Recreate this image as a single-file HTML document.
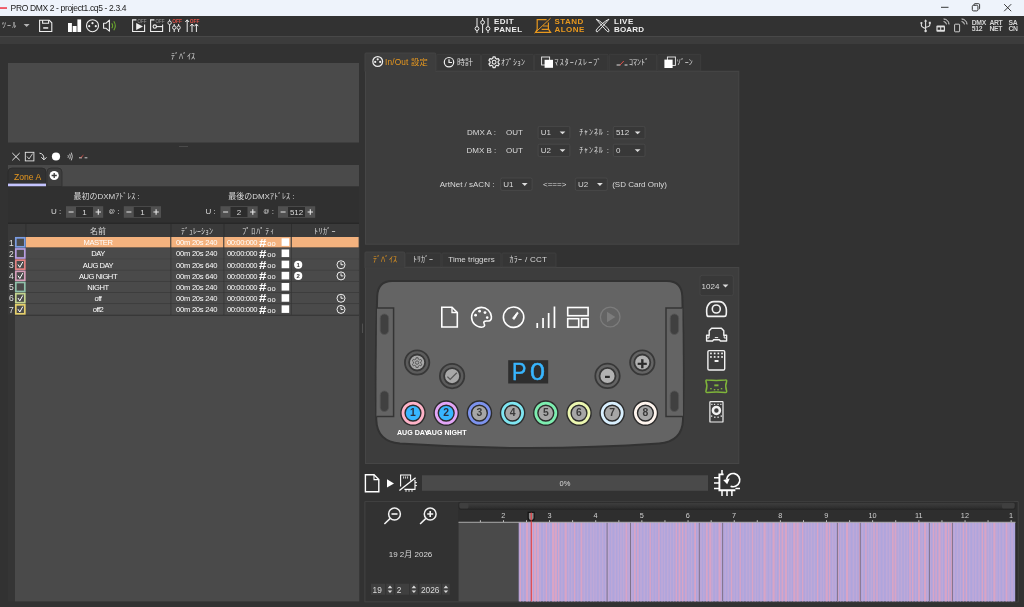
<!DOCTYPE html>
<html lang="ja">
<head>
<meta charset="utf-8">
<title>PRO DMX 2 - project1.cq5 - 2.3.4</title>
<style>
html,body{margin:0;padding:0;}
body{width:1024px;height:607px;overflow:hidden;background:#323232;position:relative;font-family:"Liberation Sans","Noto Sans CJK JP",sans-serif;font-size:8px;color:#dadada;}
#gfx{position:absolute;left:0;top:0;width:1024px;height:607px;}
#txt{position:absolute;left:0;top:0;width:1024px;height:607px;will-change:transform;}
.t{position:absolute;white-space:nowrap;line-height:1;}
.c{transform:translateX(-50%);}
.b{font-weight:bold;}
.or{color:#e8981e;}
</style>
</head>
<body>
<svg id="gfx" width="1024" height="607" viewBox="0 0 1024 607">
<rect x="0" y="0" width="1024" height="16" fill="#eef3fb" />
<rect x="0" y="16" width="1024" height="20" fill="#323232" />
<rect x="0" y="36" width="1024" height="1" fill="#484848" />
<rect x="0" y="37" width="1024" height="7" fill="#3c3c3c" />
<rect x="0" y="7.1" width="7" height="1.9" fill="#ee5a68" />
<g stroke="#222" stroke-width="0.9" fill="none"><path d="M941 7.3H948.5"/><rect x="972.3" y="5.3" width="5.6" height="5.6" rx="1.2"/><path d="M974 5.3V4.6Q974 3.7 975 3.7H978.6Q979.6 3.7 979.6 4.7V8.3Q979.6 9.2 978.7 9.2"/><path d="M1004.2 4.2L1011.2 11.2M1011.2 4.2L1004.2 11.2"/></g>
<rect x="8" y="63" width="351" height="79.5" fill="#4a4a4a" />
<rect x="179" y="146" width="9" height="1" fill="#4a4a4a" />
<rect x="8" y="165" width="351" height="21.5" fill="#4a4a4a" />
<path d="M8 186.5V172Q8 168 12 168H42Q46 168 46 172V186.5Z" fill="#323232" stroke="#2a2a2a" stroke-width="0.8"/>
<rect x="8" y="183.6" width="38" height="2.9" fill="#c4c4ff" />
<path d="M47 186.5V172Q47 168 51 168H58Q62 168 62 172V186.5Z" fill="#3e3e3e" stroke="#2e2e2e" stroke-width="0.8"/>
<circle cx="54.2" cy="175.5" r="4.6" fill="#fff"/><path d="M51.6 175.5H56.8M54.2 172.9V178.1" stroke="#3a3a3a" stroke-width="1.3"/>
<rect x="8" y="186.5" width="351" height="36" fill="#303030" />
<rect x="8" y="222.5" width="351" height="1.5" fill="#282828" />
<rect x="66" y="206.2" width="37.2" height="11.6" fill="#505050" />
<rect x="76" y="207" width="17" height="10" fill="#2c2c2c" />
<path d="M68.6 212H73.6M95.6 212H101M98.3 209.3V214.7" stroke="#e6e6e6" stroke-width="1.1"/>
<rect x="123.8" y="206.2" width="37.2" height="11.6" fill="#505050" />
<rect x="133.8" y="207" width="17" height="10" fill="#2c2c2c" />
<path d="M126.39999999999999 212H131.4M153.4 212H158.8M156.1 209.3V214.7" stroke="#e6e6e6" stroke-width="1.1"/>
<rect x="220.5" y="206.2" width="37.2" height="11.6" fill="#505050" />
<rect x="230.5" y="207" width="17" height="10" fill="#2c2c2c" />
<path d="M223.1 212H228.1M250.1 212H255.5M252.8 209.3V214.7" stroke="#e6e6e6" stroke-width="1.1"/>
<rect x="278" y="206.2" width="37.2" height="11.6" fill="#505050" />
<rect x="288" y="207" width="17" height="10" fill="#2c2c2c" />
<path d="M280.6 212H285.6M307.6 212H313M310.3 209.3V214.7" stroke="#e6e6e6" stroke-width="1.1"/>
<rect x="8" y="224" width="351" height="13" fill="#3a3a3a" />
<rect x="8" y="237" width="351" height="364.4" fill="#353535" />
<rect x="15" y="237" width="344.3" height="364.4" fill="#4a4a4a" />
<rect x="8" y="237" width="7" height="78.3" fill="#3a3a3a" />
<rect x="25.5" y="224" width="0.8" height="13" fill="#2c2c2c" />
<rect x="170.6" y="224" width="0.8" height="13" fill="#2c2c2c" />
<rect x="223.6" y="224" width="0.8" height="13" fill="#2c2c2c" />
<rect x="291" y="224" width="0.8" height="13" fill="#2c2c2c" />
<rect x="8" y="247.47" width="351" height="0.8" fill="#363636" />
<rect x="26" y="237.0" width="144.3" height="10.37" fill="#f4b27e" />
<rect x="171" y="237.0" width="52.30000000000001" height="10.37" fill="#f4b27e" />
<rect x="224" y="237.0" width="66.60000000000002" height="10.37" fill="#f4b27e" />
<rect x="291.3" y="237.0" width="67.30000000000001" height="10.37" fill="#f4b27e" />
<rect x="170.6" y="237.0" width="0.7" height="11.17" fill="#363636" />
<rect x="223.6" y="237.0" width="0.7" height="11.17" fill="#363636" />
<rect x="291" y="237.0" width="0.7" height="11.17" fill="#363636" />
<rect x="15.8" y="237.80" width="9" height="9" fill="#4a4a4a" stroke="#7b9de3" stroke-width="1.7"/>
<rect x="281.6" y="238.3" width="7.6" height="7.6" fill="#fff" />
<rect x="8" y="258.64" width="351" height="0.8" fill="#363636" />
<rect x="26" y="248.17" width="144.3" height="10.37" fill="#4a4a4a" />
<rect x="171" y="248.17" width="52.30000000000001" height="10.37" fill="#4a4a4a" />
<rect x="224" y="248.17" width="66.60000000000002" height="10.37" fill="#4a4a4a" />
<rect x="291.3" y="248.17" width="67.30000000000001" height="10.37" fill="#4a4a4a" />
<rect x="170.6" y="248.17" width="0.7" height="11.17" fill="#363636" />
<rect x="223.6" y="248.17" width="0.7" height="11.17" fill="#363636" />
<rect x="291" y="248.17" width="0.7" height="11.17" fill="#363636" />
<rect x="15.8" y="248.97" width="9" height="9" fill="#4a4a4a" stroke="#b89fe2" stroke-width="1.7"/>
<rect x="281.6" y="249.47" width="7.6" height="7.6" fill="#fff" />
<rect x="8" y="269.81" width="351" height="0.8" fill="#363636" />
<rect x="26" y="259.34" width="144.3" height="10.37" fill="#4a4a4a" />
<rect x="171" y="259.34" width="52.30000000000001" height="10.37" fill="#4a4a4a" />
<rect x="224" y="259.34" width="66.60000000000002" height="10.37" fill="#4a4a4a" />
<rect x="291.3" y="259.34" width="67.30000000000001" height="10.37" fill="#4a4a4a" />
<rect x="170.6" y="259.34" width="0.7" height="11.17" fill="#363636" />
<rect x="223.6" y="259.34" width="0.7" height="11.17" fill="#363636" />
<rect x="291" y="259.34" width="0.7" height="11.17" fill="#363636" />
<rect x="15.8" y="260.14" width="9" height="9" fill="#4a4a4a" stroke="#e58383" stroke-width="1.7"/>
<path d="M18 264.54L19.8 267.34L22.8 261.94" stroke="#fff" stroke-width="1" fill="none"/>
<rect x="281.6" y="260.64" width="7.6" height="7.6" fill="#fff" />
<circle cx="298.2" cy="264.74" r="4.1" fill="#fff"/>
<g stroke="#fff" fill="none" stroke-width="0.9"><circle cx="341" cy="264.74" r="4"/><path d="M341 262.14V264.74H343.4"/></g>
<rect x="8" y="280.98" width="351" height="0.8" fill="#363636" />
<rect x="26" y="270.51" width="144.3" height="10.37" fill="#4a4a4a" />
<rect x="171" y="270.51" width="52.30000000000001" height="10.37" fill="#4a4a4a" />
<rect x="224" y="270.51" width="66.60000000000002" height="10.37" fill="#4a4a4a" />
<rect x="291.3" y="270.51" width="67.30000000000001" height="10.37" fill="#4a4a4a" />
<rect x="170.6" y="270.51" width="0.7" height="11.17" fill="#363636" />
<rect x="223.6" y="270.51" width="0.7" height="11.17" fill="#363636" />
<rect x="291" y="270.51" width="0.7" height="11.17" fill="#363636" />
<rect x="15.8" y="271.31" width="9" height="9" fill="#4a4a4a" stroke="#d79fbb" stroke-width="1.7"/>
<path d="M18 275.71L19.8 278.51L22.8 273.11" stroke="#fff" stroke-width="1" fill="none"/>
<rect x="281.6" y="271.81" width="7.6" height="7.6" fill="#fff" />
<circle cx="298.2" cy="275.91" r="4.1" fill="#fff"/>
<g stroke="#fff" fill="none" stroke-width="0.9"><circle cx="341" cy="275.91" r="4"/><path d="M341 273.31V275.91H343.4"/></g>
<rect x="8" y="292.15000000000003" width="351" height="0.8" fill="#363636" />
<rect x="26" y="281.68" width="144.3" height="10.37" fill="#4a4a4a" />
<rect x="171" y="281.68" width="52.30000000000001" height="10.37" fill="#4a4a4a" />
<rect x="224" y="281.68" width="66.60000000000002" height="10.37" fill="#4a4a4a" />
<rect x="291.3" y="281.68" width="67.30000000000001" height="10.37" fill="#4a4a4a" />
<rect x="170.6" y="281.68" width="0.7" height="11.17" fill="#363636" />
<rect x="223.6" y="281.68" width="0.7" height="11.17" fill="#363636" />
<rect x="291" y="281.68" width="0.7" height="11.17" fill="#363636" />
<rect x="15.8" y="282.48" width="9" height="9" fill="#4a4a4a" stroke="#8fc0aa" stroke-width="1.7"/>
<rect x="281.6" y="282.98" width="7.6" height="7.6" fill="#fff" />
<rect x="8" y="303.32000000000005" width="351" height="0.8" fill="#363636" />
<rect x="26" y="292.85" width="144.3" height="10.37" fill="#4a4a4a" />
<rect x="171" y="292.85" width="52.30000000000001" height="10.37" fill="#4a4a4a" />
<rect x="224" y="292.85" width="66.60000000000002" height="10.37" fill="#4a4a4a" />
<rect x="291.3" y="292.85" width="67.30000000000001" height="10.37" fill="#4a4a4a" />
<rect x="170.6" y="292.85" width="0.7" height="11.17" fill="#363636" />
<rect x="223.6" y="292.85" width="0.7" height="11.17" fill="#363636" />
<rect x="291" y="292.85" width="0.7" height="11.17" fill="#363636" />
<rect x="15.8" y="293.65" width="9" height="9" fill="#4a4a4a" stroke="#c6d68f" stroke-width="1.7"/>
<path d="M18 298.05L19.8 300.85L22.8 295.45" stroke="#fff" stroke-width="1" fill="none"/>
<rect x="281.6" y="294.15" width="7.6" height="7.6" fill="#fff" />
<g stroke="#fff" fill="none" stroke-width="0.9"><circle cx="341" cy="298.25" r="4"/><path d="M341 295.65V298.25H343.4"/></g>
<rect x="8" y="314.49" width="351" height="0.8" fill="#363636" />
<rect x="26" y="304.02" width="144.3" height="10.37" fill="#4a4a4a" />
<rect x="171" y="304.02" width="52.30000000000001" height="10.37" fill="#4a4a4a" />
<rect x="224" y="304.02" width="66.60000000000002" height="10.37" fill="#4a4a4a" />
<rect x="291.3" y="304.02" width="67.30000000000001" height="10.37" fill="#4a4a4a" />
<rect x="170.6" y="304.02" width="0.7" height="11.17" fill="#363636" />
<rect x="223.6" y="304.02" width="0.7" height="11.17" fill="#363636" />
<rect x="291" y="304.02" width="0.7" height="11.17" fill="#363636" />
<rect x="15.8" y="304.82" width="9" height="9" fill="#4a4a4a" stroke="#e6d06c" stroke-width="1.7"/>
<path d="M18 309.22L19.8 312.02L22.8 306.62" stroke="#fff" stroke-width="1" fill="none"/>
<rect x="281.6" y="305.32" width="7.6" height="7.6" fill="#fff" />
<g stroke="#fff" fill="none" stroke-width="0.9"><circle cx="341" cy="309.42" r="4"/><path d="M341 306.82V309.42H343.4"/></g>
<rect x="8" y="315.2" width="351" height="0.8" fill="#363636" />
<g stroke="#e6e6e6" stroke-width="1" fill="none">
<path d="M12.3 153L19.7 160.3M19.7 153L12.3 160.3"/>
<rect x="25.3" y="152.3" width="8.6" height="8.6" stroke-width="0.9"/>
<path d="M27 156.5L29 159L32.6 153.6" stroke-width="0.8"/>
<path d="M39.5 153.2Q44 153.5 44 159.5M41.3 157.3L44 159.8L46.5 157.3" stroke-width="1"/>
<path d="M68 155.2Q68.8 156.5 68 157.8M69.7 153.8Q71 156.5 69.7 159.2M71.3 152.6Q73.4 156.5 71.3 160.4" stroke-width="0.8"/>
<path d="M79 157.8H82M84.6 157.8H87.4" stroke="#ddd" stroke-width="0.9"/>
<path d="M80.6 157.8L83.4 155.2" stroke="#e05048" stroke-width="0.9"/>
</g><circle cx="56" cy="156.5" r="4.1" fill="#fff"/>
<rect x="365" y="70.8" width="374.3" height="173.9" fill="#464646" />
<rect x="366" y="71.8" width="372.3" height="171.9" fill="#3d3d3d" />
<path d="M436.8 70.8V55.3Q436.8 54.3 437.8 54.3H479.5Q480.5 54.3 480.5 55.3V70.8Z" fill="#363636" stroke="#424242" stroke-width="0.7"/>
<path d="M481.5 70.8V55.3Q481.5 54.3 482.5 54.3H532.4Q533.4 54.3 533.4 55.3V70.8Z" fill="#363636" stroke="#424242" stroke-width="0.7"/>
<path d="M534.4 70.8V55.3Q534.4 54.3 535.4 54.3H607Q608 54.3 608 55.3V70.8Z" fill="#363636" stroke="#424242" stroke-width="0.7"/>
<path d="M609.3 70.8V55.3Q609.3 54.3 610.3 54.3H655.6Q656.6 54.3 656.6 55.3V70.8Z" fill="#363636" stroke="#424242" stroke-width="0.7"/>
<path d="M657.8 70.8V55.3Q657.8 54.3 658.8 54.3H699.7Q700.7 54.3 700.7 55.3V70.8Z" fill="#363636" stroke="#424242" stroke-width="0.7"/>
<path d="M365 71.5V54Q365 53 366 53H434.8Q435.8 53 435.8 54V71.5Z" fill="#3d3d3d" stroke="#464646" stroke-width="0.8"/>
<rect x="365.8" y="70" width="69.6" height="2" fill="#3d3d3d" />
<rect x="538.1" y="126.4" width="31.8" height="12.4" rx="1.5" fill="#383838" stroke="#4c4c4c" stroke-width="0.8"/>
<path d="M559.6 131.4H565.4L562.5 134.3Z" fill="#ddd"/>
<rect x="613.3" y="126.4" width="31.7" height="12.4" rx="1.5" fill="#383838" stroke="#4c4c4c" stroke-width="0.8"/>
<path d="M634.7 131.4H640.5L637.6 134.3Z" fill="#ddd"/>
<rect x="538.1" y="144.2" width="31.8" height="12.4" rx="1.5" fill="#383838" stroke="#4c4c4c" stroke-width="0.8"/>
<path d="M559.6 149.2H565.4L562.5 152.1Z" fill="#ddd"/>
<rect x="613.3" y="144.2" width="31.7" height="12.4" rx="1.5" fill="#383838" stroke="#4c4c4c" stroke-width="0.8"/>
<path d="M634.7 149.2H640.5L637.6 152.1Z" fill="#ddd"/>
<rect x="500.7" y="178" width="31.4" height="12.4" rx="1.5" fill="#383838" stroke="#4c4c4c" stroke-width="0.8"/>
<path d="M521.8000000000001 183H527.6L524.7 185.9Z" fill="#ddd"/>
<rect x="575.3" y="178" width="32" height="12.4" rx="1.5" fill="#383838" stroke="#4c4c4c" stroke-width="0.8"/>
<path d="M597.0 183H602.8L599.9 185.9Z" fill="#ddd"/>
<rect x="365" y="267" width="374.3" height="197" fill="#464646" />
<rect x="366" y="268" width="372.3" height="195" fill="#3d3d3d" />
<path d="M405.6 267V254Q405.6 253 406.6 253H440Q441 253 441 254V267Z" fill="#363636" stroke="#424242" stroke-width="0.7"/>
<path d="M442 267V254Q442 253 443 253H500Q501 253 501 254V267Z" fill="#363636" stroke="#424242" stroke-width="0.7"/>
<path d="M502 267V254Q502 253 503 253H555Q556 253 556 254V267Z" fill="#363636" stroke="#424242" stroke-width="0.7"/>
<path d="M365 268V253Q365 252 366 252H403.6Q404.6 252 404.6 253V268Z" fill="#3d3d3d" stroke="#464646" stroke-width="0.8"/>
<rect x="365.8" y="266.5" width="38.4" height="2" fill="#3d3d3d" />
<rect x="362" y="323.6" width="0.8" height="9.4" fill="#585858" />
<rect x="700" y="275.3" width="33.3" height="20.4" rx="2" fill="#383838" stroke="#474747" stroke-width="0.8"/><path d="M722.6 284.6H728.4L725.5 287.6Z" fill="#ddd"/>
<g id="device">
<path d="M392 281H667Q681.5 281 682.3 296Q684.4 358 683 420Q682.3 441.5 659 443.6Q530 452.5 400 443.6Q377 441.5 376.3 420Q374.9 358 377.2 296Q378 281 392 281Z" fill="#646464" stroke="#323232" stroke-width="2"/>
<path d="M377 308H393.6V416.5H376.4" fill="#646464" stroke="#343434" stroke-width="1.5"/>
<path d="M682.4 308H666V416.5H683" fill="#646464" stroke="#343434" stroke-width="1.5"/>
<g fill="#404040" stroke="#555" stroke-width="0.9">
<rect x="380.2" y="314" width="8.4" height="20.5" rx="4.2"/>
<rect x="380.2" y="391" width="8.4" height="20.5" rx="4.2"/>
<rect x="670.2" y="314" width="8.4" height="20.5" rx="4.2"/>
<rect x="670.2" y="391" width="8.4" height="20.5" rx="4.2"/>
</g>
<!-- top icons -->
<g stroke="#fff" stroke-width="1.6" fill="none">
<path d="M441.8 307.2H452L457.3 312.5V327H441.8Z"/><path d="M452 307.2V312.5H457.3" stroke-width="1.3"/>
<circle cx="513.6" cy="317.2" r="10.2"/>
<path d="M512.6 318.3L517.3 312.2L518.2 312.9L514.2 319.4Z" fill="#fff" stroke-width="0.9" stroke-linejoin="round"/>
<rect x="567.7" y="307.5" width="20.4" height="8.2"/><rect x="567.7" y="318.7" width="11" height="8.4"/><rect x="581.6" y="318.7" width="6.5" height="8.4"/>
</g>
<path d="M481.5 307.4A9.9 9.9 0 1 0 481.5 327.2C484.4 327.2 485.2 325.4 484.2 323.8C483.2 322 484.2 321 486.2 321H488.4C490.6 321 491.6 319.2 491.4 316.6C490.9 311.3 486.6 307.4 481.5 307.4Z" fill="none" stroke="#fff" stroke-width="1.6"/>
<g fill="#fff"><circle cx="475.6" cy="315.2" r="1.4"/><circle cx="479.6" cy="311.2" r="1.4"/><circle cx="485" cy="312.6" r="1.4"/><circle cx="487.2" cy="317.6" r="1.3"/>
<rect x="536.4" y="323" width="1.7" height="5"/><rect x="542.2" y="318" width="1.7" height="10"/><rect x="547.8" y="313" width="1.7" height="15"/><rect x="553.6" y="306.5" width="1.7" height="21.5"/></g>
<circle cx="610.2" cy="317" r="9.8" fill="none" stroke="#7c7c7c" stroke-width="1.3"/><path d="M607 311.8L615.4 317L607 322.2Z" fill="#7c7c7c"/>
<!-- round buttons -->
<g id="rb">
<circle cx="417.1" cy="362.5" r="12.2" fill="#5c5c5c" stroke="#383838" stroke-width="1.8"/><circle cx="417.1" cy="362.5" r="8" fill="#a8a8a8" stroke="#383838" stroke-width="1.8"/>
<circle cx="452.1" cy="376.1" r="12.2" fill="#5c5c5c" stroke="#383838" stroke-width="1.8"/><circle cx="452.1" cy="376.1" r="8" fill="#a8a8a8" stroke="#383838" stroke-width="1.8"/>
<circle cx="607.5" cy="375.9" r="12.2" fill="#646464" stroke="#383838" stroke-width="1.8"/><circle cx="607.5" cy="375.9" r="8" fill="#b2b2b2" stroke="#383838" stroke-width="1.8"/>
<circle cx="642.3" cy="362.5" r="12.2" fill="#646464" stroke="#383838" stroke-width="1.8"/><circle cx="642.3" cy="362.5" r="8" fill="#b2b2b2" stroke="#383838" stroke-width="1.8"/>
<path d="M415.90 359.10L416.15 357.69L418.05 357.69L418.30 359.10L419.53 359.81L420.87 359.32L421.83 360.97L420.73 361.89L420.73 363.31L421.83 364.23L420.87 365.88L419.53 365.39L418.30 366.10L418.05 367.51L416.15 367.51L415.90 366.10L414.67 365.39L413.33 365.88L412.37 364.23L413.47 363.31L413.47 361.89L412.37 360.97L413.33 359.32L414.67 359.81Z" fill="none" stroke="#585858" stroke-width="1" stroke-linejoin="round"/>
<circle cx="417.1" cy="362.6" r="1.7" fill="none" stroke="#585858" stroke-width="1"/>
<path d="M447.4 376.6L450.2 379.4L456.8 372.8" fill="none" stroke="#585858" stroke-width="1.3"/>


<rect x="508.2" y="360.2" width="40" height="23.3" fill="#2e2e2e"/>

<circle cx="413.0" cy="413.1" r="12.1" fill="#ffb3c8" stroke="#2c2c2c" stroke-width="1.4"/><circle cx="413.0" cy="413.1" r="7.9" fill="#38b6ff" stroke="#2c2c2c" stroke-width="1.4"/>
<circle cx="446.2" cy="413.1" r="12.1" fill="#e3a6f7" stroke="#2c2c2c" stroke-width="1.4"/><circle cx="446.2" cy="413.1" r="7.9" fill="#38b6ff" stroke="#2c2c2c" stroke-width="1.4"/>
<circle cx="479.4" cy="413.1" r="12.1" fill="#7d93ee" stroke="#2c2c2c" stroke-width="1.4"/><circle cx="479.4" cy="413.1" r="7.9" fill="#a6a6a6" stroke="#2c2c2c" stroke-width="1.4"/>
<circle cx="512.6" cy="413.1" r="12.1" fill="#7fe6f2" stroke="#2c2c2c" stroke-width="1.4"/><circle cx="512.6" cy="413.1" r="7.9" fill="#a6a6a6" stroke="#2c2c2c" stroke-width="1.4"/>
<circle cx="545.8" cy="413.1" r="12.1" fill="#7deeb0" stroke="#2c2c2c" stroke-width="1.4"/><circle cx="545.8" cy="413.1" r="7.9" fill="#a6a6a6" stroke="#2c2c2c" stroke-width="1.4"/>
<circle cx="579.0" cy="413.1" r="12.1" fill="#ecf7b0" stroke="#2c2c2c" stroke-width="1.4"/><circle cx="579.0" cy="413.1" r="7.9" fill="#a6a6a6" stroke="#2c2c2c" stroke-width="1.4"/>
<circle cx="612.2" cy="413.1" r="12.1" fill="#d9f0ff" stroke="#2c2c2c" stroke-width="1.4"/><circle cx="612.2" cy="413.1" r="7.9" fill="#a6a6a6" stroke="#2c2c2c" stroke-width="1.4"/>
<circle cx="645.4" cy="413.1" r="12.1" fill="#fff5ee" stroke="#2c2c2c" stroke-width="1.4"/><circle cx="645.4" cy="413.1" r="7.9" fill="#a6a6a6" stroke="#2c2c2c" stroke-width="1.4"/>
</g>
</g>

<rect x="422" y="475.3" width="286" height="15.5" fill="#4a4a4a" />
<rect x="364.5" y="501.3" width="654" height="101" fill="#464646" />
<rect x="365.3" y="502" width="652.4" height="99.5" fill="#323232" />
<rect x="458.5" y="502" width="559" height="99.5" fill="#2c2c2c" />
<defs><linearGradient id="sbg" x1="0" y1="0" x2="0" y2="1"><stop offset="0" stop-color="#404040"/><stop offset="1" stop-color="#2a2a2a"/></linearGradient></defs><rect x="458.8" y="502.3" width="556.4" height="7" rx="2" fill="url(#sbg)" stroke="#242424" stroke-width="0.6"/>
<rect x="459.5" y="503" width="9" height="5.6" rx="1.5" fill="#3f3f3f"/><rect x="1002" y="503" width="12.5" height="5.6" rx="1.5" fill="#3f3f3f"/>
<rect x="458.5" y="510" width="557" height="12" fill="#2e2e2e" />
<rect x="458.5" y="521.8" width="557" height="1" fill="#c4c4c4" />
<rect x="458.5" y="522.8" width="60" height="78.79999999999995" fill="#4a4a4a" />
<rect x="518.6" y="522.8" width="496.6" height="78.6" fill="#afa5dd"/>
<rect x="519.6" y="522.8" width="1.4" height="78.6" fill="#d9a4c5"/>
<rect x="522.6" y="522.8" width="1.3" height="78.6" fill="#bfa8d7"/>
<rect x="525.9" y="522.8" width="2.2" height="78.6" fill="#d9a4c5"/>
<rect x="528.6" y="522.8" width="1.3" height="78.6" fill="#bfa8d7"/>
<rect x="531.3" y="522.8" width="1.8" height="78.6" fill="#d9a4c5"/>
<rect x="534.0" y="522.8" width="2.2" height="78.6" fill="#d9a4c5"/>
<rect x="537.0" y="522.8" width="2.2" height="78.6" fill="#d9a4c5"/>
<rect x="539.7" y="522.8" width="1.3" height="78.6" fill="#bfa8d7"/>
<rect x="543.0" y="522.8" width="1.3" height="78.6" fill="#bfa8d7"/>
<rect x="545.7" y="522.8" width="1.4" height="78.6" fill="#d9a4c5"/>
<rect x="548.7" y="522.8" width="1.3" height="78.6" fill="#bfa8d7"/>
<rect x="552.0" y="522.8" width="2.2" height="78.6" fill="#d9a4c5"/>
<rect x="554.7" y="522.8" width="2.2" height="78.6" fill="#d9a4c5"/>
<rect x="558.0" y="522.8" width="1.4" height="78.6" fill="#d9a4c5"/>
<rect x="561.3" y="522.8" width="1.3" height="78.6" fill="#bfa8d7"/>
<rect x="564.6" y="522.8" width="2.2" height="78.6" fill="#d9a4c5"/>
<rect x="567.9" y="522.8" width="1.6" height="78.6" fill="#bfa8d7"/>
<rect x="570.9" y="522.8" width="1.6" height="78.6" fill="#bfa8d7"/>
<rect x="573.9" y="522.8" width="1.4" height="78.6" fill="#d9a4c5"/>
<rect x="577.2" y="522.8" width="1.3" height="78.6" fill="#bfa8d7"/>
<rect x="580.5" y="522.8" width="1.8" height="78.6" fill="#d9a4c5"/>
<rect x="583.5" y="522.8" width="1.6" height="78.6" fill="#bfa8d7"/>
<rect x="586.8" y="522.8" width="1.3" height="78.6" fill="#bfa8d7"/>
<rect x="590.1" y="522.8" width="1.6" height="78.6" fill="#bfa8d7"/>
<rect x="592.8" y="522.8" width="1.6" height="78.6" fill="#bfa8d7"/>
<rect x="595.5" y="522.8" width="1.3" height="78.6" fill="#bfa8d7"/>
<rect x="598.8" y="522.8" width="1.6" height="78.6" fill="#bfa8d7"/>
<rect x="601.8" y="522.8" width="1.6" height="78.6" fill="#bfa8d7"/>
<rect x="605.1" y="522.8" width="1.3" height="78.6" fill="#bfa8d7"/>
<rect x="607.8" y="522.8" width="1.6" height="78.6" fill="#bfa8d7"/>
<rect x="611.1" y="522.8" width="1.3" height="78.6" fill="#bfa8d7"/>
<rect x="614.4" y="522.8" width="1.6" height="78.6" fill="#bfa8d7"/>
<rect x="617.4" y="522.8" width="1.6" height="78.6" fill="#bfa8d7"/>
<rect x="620.1" y="522.8" width="1.6" height="78.6" fill="#bfa8d7"/>
<rect x="622.8" y="522.8" width="1.6" height="78.6" fill="#bfa8d7"/>
<rect x="625.5" y="522.8" width="1.8" height="78.6" fill="#d9a4c5"/>
<rect x="628.2" y="522.8" width="1.6" height="78.6" fill="#bfa8d7"/>
<rect x="631.2" y="522.8" width="1.6" height="78.6" fill="#bfa8d7"/>
<rect x="633.9" y="522.8" width="1.8" height="78.6" fill="#d9a4c5"/>
<rect x="637.2" y="522.8" width="1.4" height="78.6" fill="#d9a4c5"/>
<rect x="640.2" y="522.8" width="1.6" height="78.6" fill="#bfa8d7"/>
<rect x="643.5" y="522.8" width="1.6" height="78.6" fill="#bfa8d7"/>
<rect x="646.8" y="522.8" width="1.3" height="78.6" fill="#bfa8d7"/>
<rect x="649.5" y="522.8" width="1.4" height="78.6" fill="#d9a4c5"/>
<rect x="652.2" y="522.8" width="1.3" height="78.6" fill="#bfa8d7"/>
<rect x="655.2" y="522.8" width="1.3" height="78.6" fill="#bfa8d7"/>
<rect x="658.2" y="522.8" width="1.4" height="78.6" fill="#d9a4c5"/>
<rect x="661.2" y="522.8" width="1.6" height="78.6" fill="#bfa8d7"/>
<rect x="663.9" y="522.8" width="1.3" height="78.6" fill="#bfa8d7"/>
<rect x="666.9" y="522.8" width="1.6" height="78.6" fill="#bfa8d7"/>
<rect x="669.9" y="522.8" width="1.3" height="78.6" fill="#bfa8d7"/>
<rect x="672.9" y="522.8" width="1.3" height="78.6" fill="#bfa8d7"/>
<rect x="675.6" y="522.8" width="1.4" height="78.6" fill="#d9a4c5"/>
<rect x="678.6" y="522.8" width="1.8" height="78.6" fill="#d9a4c5"/>
<rect x="681.9" y="522.8" width="1.4" height="78.6" fill="#d9a4c5"/>
<rect x="685.2" y="522.8" width="1.4" height="78.6" fill="#d9a4c5"/>
<rect x="688.2" y="522.8" width="1.3" height="78.6" fill="#bfa8d7"/>
<rect x="690.9" y="522.8" width="1.3" height="78.6" fill="#bfa8d7"/>
<rect x="694.2" y="522.8" width="1.8" height="78.6" fill="#d9a4c5"/>
<rect x="697.5" y="522.8" width="1.3" height="78.6" fill="#bfa8d7"/>
<rect x="700.2" y="522.8" width="1.6" height="78.6" fill="#bfa8d7"/>
<rect x="703.2" y="522.8" width="1.3" height="78.6" fill="#bfa8d7"/>
<rect x="705.9" y="522.8" width="1.8" height="78.6" fill="#d9a4c5"/>
<rect x="709.2" y="522.8" width="2.2" height="78.6" fill="#d9a4c5"/>
<rect x="711.9" y="522.8" width="1.3" height="78.6" fill="#bfa8d7"/>
<rect x="715.2" y="522.8" width="1.3" height="78.6" fill="#bfa8d7"/>
<rect x="718.5" y="522.8" width="2.2" height="78.6" fill="#d9a4c5"/>
<rect x="721.2" y="522.8" width="1.6" height="78.6" fill="#bfa8d7"/>
<rect x="724.5" y="522.8" width="1.3" height="78.6" fill="#bfa8d7"/>
<rect x="727.5" y="522.8" width="1.6" height="78.6" fill="#bfa8d7"/>
<rect x="730.8" y="522.8" width="1.4" height="78.6" fill="#d9a4c5"/>
<rect x="733.5" y="522.8" width="1.3" height="78.6" fill="#bfa8d7"/>
<rect x="736.2" y="522.8" width="1.6" height="78.6" fill="#bfa8d7"/>
<rect x="739.5" y="522.8" width="1.4" height="78.6" fill="#d9a4c5"/>
<rect x="742.5" y="522.8" width="1.3" height="78.6" fill="#bfa8d7"/>
<rect x="745.8" y="522.8" width="1.6" height="78.6" fill="#bfa8d7"/>
<rect x="748.8" y="522.8" width="1.6" height="78.6" fill="#bfa8d7"/>
<rect x="751.8" y="522.8" width="1.4" height="78.6" fill="#d9a4c5"/>
<rect x="754.5" y="522.8" width="1.6" height="78.6" fill="#bfa8d7"/>
<rect x="757.2" y="522.8" width="1.3" height="78.6" fill="#bfa8d7"/>
<rect x="760.2" y="522.8" width="1.6" height="78.6" fill="#bfa8d7"/>
<rect x="763.5" y="522.8" width="2.2" height="78.6" fill="#d9a4c5"/>
<rect x="766.2" y="522.8" width="1.3" height="78.6" fill="#bfa8d7"/>
<rect x="769.2" y="522.8" width="1.6" height="78.6" fill="#bfa8d7"/>
<rect x="772.5" y="522.8" width="2.2" height="78.6" fill="#d9a4c5"/>
<rect x="775.5" y="522.8" width="1.3" height="78.6" fill="#bfa8d7"/>
<rect x="778.8" y="522.8" width="1.4" height="78.6" fill="#d9a4c5"/>
<rect x="781.5" y="522.8" width="1.8" height="78.6" fill="#d9a4c5"/>
<rect x="784.8" y="522.8" width="2.2" height="78.6" fill="#d9a4c5"/>
<rect x="787.8" y="522.8" width="1.6" height="78.6" fill="#bfa8d7"/>
<rect x="790.5" y="522.8" width="1.3" height="78.6" fill="#bfa8d7"/>
<rect x="793.2" y="522.8" width="2.2" height="78.6" fill="#d9a4c5"/>
<rect x="796.5" y="522.8" width="2.2" height="78.6" fill="#d9a4c5"/>
<rect x="799.2" y="522.8" width="1.3" height="78.6" fill="#bfa8d7"/>
<rect x="801.9" y="522.8" width="1.4" height="78.6" fill="#d9a4c5"/>
<rect x="804.9" y="522.8" width="1.6" height="78.6" fill="#bfa8d7"/>
<rect x="807.9" y="522.8" width="1.3" height="78.6" fill="#bfa8d7"/>
<rect x="810.6" y="522.8" width="1.6" height="78.6" fill="#bfa8d7"/>
<rect x="813.6" y="522.8" width="1.6" height="78.6" fill="#bfa8d7"/>
<rect x="816.9" y="522.8" width="1.4" height="78.6" fill="#d9a4c5"/>
<rect x="820.2" y="522.8" width="1.6" height="78.6" fill="#bfa8d7"/>
<rect x="822.9" y="522.8" width="1.3" height="78.6" fill="#bfa8d7"/>
<rect x="825.6" y="522.8" width="2.2" height="78.6" fill="#d9a4c5"/>
<rect x="828.9" y="522.8" width="1.4" height="78.6" fill="#d9a4c5"/>
<rect x="831.9" y="522.8" width="1.6" height="78.6" fill="#bfa8d7"/>
<rect x="834.6" y="522.8" width="1.3" height="78.6" fill="#bfa8d7"/>
<rect x="837.3" y="522.8" width="1.4" height="78.6" fill="#d9a4c5"/>
<rect x="840.0" y="522.8" width="1.3" height="78.6" fill="#bfa8d7"/>
<rect x="842.7" y="522.8" width="1.3" height="78.6" fill="#bfa8d7"/>
<rect x="846.0" y="522.8" width="2.2" height="78.6" fill="#d9a4c5"/>
<rect x="849.3" y="522.8" width="1.3" height="78.6" fill="#bfa8d7"/>
<rect x="852.6" y="522.8" width="1.6" height="78.6" fill="#bfa8d7"/>
<rect x="855.9" y="522.8" width="1.3" height="78.6" fill="#bfa8d7"/>
<rect x="858.9" y="522.8" width="1.4" height="78.6" fill="#d9a4c5"/>
<rect x="861.9" y="522.8" width="1.3" height="78.6" fill="#bfa8d7"/>
<rect x="865.2" y="522.8" width="1.4" height="78.6" fill="#d9a4c5"/>
<rect x="867.9" y="522.8" width="1.3" height="78.6" fill="#bfa8d7"/>
<rect x="870.6" y="522.8" width="1.6" height="78.6" fill="#bfa8d7"/>
<rect x="873.3" y="522.8" width="1.4" height="78.6" fill="#d9a4c5"/>
<rect x="876.3" y="522.8" width="1.4" height="78.6" fill="#d9a4c5"/>
<rect x="879.3" y="522.8" width="1.3" height="78.6" fill="#bfa8d7"/>
<rect x="882.6" y="522.8" width="1.3" height="78.6" fill="#bfa8d7"/>
<rect x="885.9" y="522.8" width="1.6" height="78.6" fill="#bfa8d7"/>
<rect x="888.9" y="522.8" width="1.6" height="78.6" fill="#bfa8d7"/>
<rect x="891.9" y="522.8" width="1.8" height="78.6" fill="#d9a4c5"/>
<rect x="894.6" y="522.8" width="1.8" height="78.6" fill="#d9a4c5"/>
<rect x="897.6" y="522.8" width="1.6" height="78.6" fill="#bfa8d7"/>
<rect x="900.6" y="522.8" width="1.6" height="78.6" fill="#bfa8d7"/>
<rect x="903.9" y="522.8" width="1.3" height="78.6" fill="#bfa8d7"/>
<rect x="906.6" y="522.8" width="1.3" height="78.6" fill="#bfa8d7"/>
<rect x="909.3" y="522.8" width="1.4" height="78.6" fill="#d9a4c5"/>
<rect x="912.0" y="522.8" width="1.4" height="78.6" fill="#d9a4c5"/>
<rect x="915.0" y="522.8" width="1.6" height="78.6" fill="#bfa8d7"/>
<rect x="918.0" y="522.8" width="2.2" height="78.6" fill="#d9a4c5"/>
<rect x="921.3" y="522.8" width="1.6" height="78.6" fill="#bfa8d7"/>
<rect x="924.0" y="522.8" width="2.2" height="78.6" fill="#d9a4c5"/>
<rect x="926.7" y="522.8" width="1.3" height="78.6" fill="#bfa8d7"/>
<rect x="929.7" y="522.8" width="1.3" height="78.6" fill="#bfa8d7"/>
<rect x="932.7" y="522.8" width="1.4" height="78.6" fill="#d9a4c5"/>
<rect x="935.4" y="522.8" width="1.4" height="78.6" fill="#d9a4c5"/>
<rect x="938.4" y="522.8" width="2.2" height="78.6" fill="#d9a4c5"/>
<rect x="941.4" y="522.8" width="1.6" height="78.6" fill="#bfa8d7"/>
<rect x="944.7" y="522.8" width="2.2" height="78.6" fill="#d9a4c5"/>
<rect x="948.0" y="522.8" width="1.4" height="78.6" fill="#d9a4c5"/>
<rect x="950.7" y="522.8" width="1.4" height="78.6" fill="#d9a4c5"/>
<rect x="953.4" y="522.8" width="1.6" height="78.6" fill="#bfa8d7"/>
<rect x="956.7" y="522.8" width="1.6" height="78.6" fill="#bfa8d7"/>
<rect x="959.7" y="522.8" width="1.3" height="78.6" fill="#bfa8d7"/>
<rect x="962.7" y="522.8" width="1.4" height="78.6" fill="#d9a4c5"/>
<rect x="965.7" y="522.8" width="1.4" height="78.6" fill="#d9a4c5"/>
<rect x="969.0" y="522.8" width="1.3" height="78.6" fill="#bfa8d7"/>
<rect x="972.3" y="522.8" width="1.6" height="78.6" fill="#bfa8d7"/>
<rect x="975.0" y="522.8" width="1.6" height="78.6" fill="#bfa8d7"/>
<rect x="978.3" y="522.8" width="1.6" height="78.6" fill="#bfa8d7"/>
<rect x="981.6" y="522.8" width="1.4" height="78.6" fill="#d9a4c5"/>
<rect x="984.3" y="522.8" width="2.2" height="78.6" fill="#d9a4c5"/>
<rect x="987.6" y="522.8" width="1.6" height="78.6" fill="#bfa8d7"/>
<rect x="990.6" y="522.8" width="1.3" height="78.6" fill="#bfa8d7"/>
<rect x="993.3" y="522.8" width="2.2" height="78.6" fill="#d9a4c5"/>
<rect x="996.3" y="522.8" width="1.3" height="78.6" fill="#bfa8d7"/>
<rect x="999.0" y="522.8" width="1.6" height="78.6" fill="#bfa8d7"/>
<rect x="1002.3" y="522.8" width="1.6" height="78.6" fill="#bfa8d7"/>
<rect x="1005.6" y="522.8" width="1.8" height="78.6" fill="#d9a4c5"/>
<rect x="1008.3" y="522.8" width="1.3" height="78.6" fill="#bfa8d7"/>
<rect x="1011.3" y="522.8" width="1.6" height="78.6" fill="#bfa8d7"/>
<rect x="606.6" y="522.8" width="1" height="78.6" fill="#807289"/>
<rect x="630.0" y="522.8" width="1" height="78.6" fill="#807289"/>
<rect x="698.8" y="522.8" width="1" height="78.6" fill="#807289"/>
<rect x="722.1" y="522.8" width="1" height="78.6" fill="#807289"/>
<rect x="836.9" y="522.8" width="1" height="78.6" fill="#807289"/>
<rect x="859.8" y="522.8" width="1" height="78.6" fill="#807289"/>
<rect x="928.9" y="522.8" width="1" height="78.6" fill="#807289"/>
<rect x="951.9" y="522.8" width="1" height="78.6" fill="#807289"/>
<rect x="479.9" y="520.2" width="0.9" height="1.8" fill="#d0d0d0"/>
<rect x="503.0" y="520.2" width="0.9" height="1.8" fill="#d0d0d0"/>
<rect x="526.0" y="520.2" width="0.9" height="1.8" fill="#d0d0d0"/>
<rect x="549.1" y="520.2" width="0.9" height="1.8" fill="#d0d0d0"/>
<rect x="572.2" y="520.2" width="0.9" height="1.8" fill="#d0d0d0"/>
<rect x="595.3" y="520.2" width="0.9" height="1.8" fill="#d0d0d0"/>
<rect x="618.4" y="520.2" width="0.9" height="1.8" fill="#d0d0d0"/>
<rect x="641.4" y="520.2" width="0.9" height="1.8" fill="#d0d0d0"/>
<rect x="664.5" y="520.2" width="0.9" height="1.8" fill="#d0d0d0"/>
<rect x="687.6" y="520.2" width="0.9" height="1.8" fill="#d0d0d0"/>
<rect x="710.7" y="520.2" width="0.9" height="1.8" fill="#d0d0d0"/>
<rect x="733.8" y="520.2" width="0.9" height="1.8" fill="#d0d0d0"/>
<rect x="756.8" y="520.2" width="0.9" height="1.8" fill="#d0d0d0"/>
<rect x="779.9" y="520.2" width="0.9" height="1.8" fill="#d0d0d0"/>
<rect x="803.0" y="520.2" width="0.9" height="1.8" fill="#d0d0d0"/>
<rect x="826.1" y="520.2" width="0.9" height="1.8" fill="#d0d0d0"/>
<rect x="849.2" y="520.2" width="0.9" height="1.8" fill="#d0d0d0"/>
<rect x="872.2" y="520.2" width="0.9" height="1.8" fill="#d0d0d0"/>
<rect x="895.3" y="520.2" width="0.9" height="1.8" fill="#d0d0d0"/>
<rect x="918.4" y="520.2" width="0.9" height="1.8" fill="#d0d0d0"/>
<rect x="941.5" y="520.2" width="0.9" height="1.8" fill="#d0d0d0"/>
<rect x="964.6" y="520.2" width="0.9" height="1.8" fill="#d0d0d0"/>
<rect x="987.6" y="520.2" width="0.9" height="1.8" fill="#d0d0d0"/>
<rect x="1010.7" y="520.2" width="0.9" height="1.8" fill="#d0d0d0"/>
<rect x="530.7" y="513" width="1.2" height="88.4" fill="#e0454a"/>
<path d="M528.2 512.3H534.2V518Q534.2 520.6 531.2 520.6Q528.2 520.6 528.2 518Z" fill="#8a8a8a" stroke="#141414" stroke-width="1.3"/><rect x="530.6" y="512.6" width="1.3" height="8" fill="#e0454a"/>
<rect x="371" y="583.7" width="14.3" height="11" fill="#3f3f3f" />
<rect x="386.2" y="583.7" width="7.6" height="11" fill="#3f3f3f" />
<path d="M387.7 588.2L390.0 585.6L392.3 588.2ZM387.7 590.4L390.0 593L392.3 590.4Z" fill="#d8d8d8"/>
<rect x="395.2" y="583.7" width="14" height="11" fill="#3f3f3f" />
<rect x="410.09999999999997" y="583.7" width="7.6" height="11" fill="#3f3f3f" />
<path d="M411.59999999999997 588.2L413.9 585.6L416.2 588.2ZM411.59999999999997 590.4L413.9 593L416.2 590.4Z" fill="#d8d8d8"/>
<rect x="419.4" y="583.7" width="21.8" height="11" fill="#3f3f3f" />
<rect x="442.09999999999997" y="583.7" width="7.6" height="11" fill="#3f3f3f" />
<path d="M443.59999999999997 588.2L445.9 585.6L448.2 588.2ZM443.59999999999997 590.4L445.9 593L448.2 590.4Z" fill="#d8d8d8"/>
<g id="toolbar-icons">
<!-- tool dropdown arrow -->
<path d="M23.6 23.9H29.6L26.6 27Z" fill="#b4b4b4"/>
<!-- save -->
<g stroke="#eee" stroke-width="1.1" fill="none">
<path d="M39.6 20.3H49.3L51.8 22.8V31.5H39.6Z"/>
<path d="M42.6 20.3V23.2H48.6V20.3"/>
</g>
<rect x="43.2" y="27.2" width="5" height="1.5" fill="#eee"/>
<!-- bars -->
<g fill="#fff"><rect x="68" y="23" width="3.9" height="9"/><rect x="72.7" y="26" width="3.9" height="6"/><rect x="77.4" y="19.4" width="3.7" height="12.6"/></g>
<!-- xlr -->
<circle cx="92.5" cy="25.7" r="6" fill="none" stroke="#f0f0f0" stroke-width="1.1"/>
<g fill="#f0f0f0"><circle cx="92.5" cy="23.2" r="1.1"/><circle cx="89.2" cy="26.2" r="1.1"/><circle cx="95.8" cy="26.2" r="1.1"/></g>
<!-- speaker -->
<path d="M103.6 23.3H105.8L109.4 20.2V31.2L105.8 28.2H103.6Z" fill="none" stroke="#f0f0f0" stroke-width="1.1" stroke-linejoin="round"/>
<path d="M111.8 23.2Q113.5 25.7 111.8 28.2M113.8 21.2Q116.8 25.7 113.8 30.2" fill="none" stroke="#6aa52e" stroke-width="1.1"/>
<!-- play box OFF -->
<g stroke="#eee" stroke-width="1.1" fill="none">
<path d="M136.4 19.9H132.6V31.5H144.6V24.6"/>
<path d="M154.4 19.9H150.6V31.5H162.6V24.6"/>
<circle cx="154.8" cy="26.6" r="1.7"/><path d="M156.5 26.6H162.6"/>
</g>
<path d="M136.2 23L143 26.5L136.2 30Z" fill="#eee"/>
<!-- faders -->
<g stroke="#eee" stroke-width="1" fill="none">
<path d="M169.6 19.4V32M174.2 24V32M178.6 24V32"/>
</g>
<g stroke="#eee" stroke-width="0.9" fill="#2e2e2e"><circle cx="169.6" cy="22.8" r="1.7"/><circle cx="174.2" cy="27.6" r="1.7"/><circle cx="178.6" cy="27.6" r="1.7"/></g>
<!-- arrows -->
<g stroke="#eee" stroke-width="1" fill="none">
<path d="M187.2 20V32M192 24.4V32M196.4 24.4V32"/>
<path d="M185.4 22L187.2 19.8L189 22M190.2 26.2L192 24L193.8 26.2M194.6 26.2L196.4 24L198.2 26.2"/>
</g>
<!-- edit panel faders -->
<g stroke="#eee" stroke-width="1" fill="none"><path d="M477 18V33M482.6 18V33M488 18V33"/></g>
<g stroke="#eee" stroke-width="1" fill="#2e2e2e"><circle cx="477" cy="28.6" r="1.9"/><circle cx="482.6" cy="22.4" r="1.9"/><circle cx="488" cy="28.6" r="1.9"/></g>
<!-- stand alone -->
<g stroke="#e8981e" stroke-width="1.2" fill="none">
<path d="M537.2 29.4V19.6H546.6M548.4 22.6V29.4M541.6 29.4H548.6L550.6 32.4H535.6L537.2 29.4M543 26H548"/>
<path d="M534.6 33.2L550.6 18.2" stroke-width="1"/>
</g>
<!-- live board -->
<g stroke="#eee" stroke-width="1" fill="none" stroke-linejoin="round">
<path d="M609 19.2C606.6 22 600.5 28.8 598 31.4C596.8 32.4 595.6 31.4 596.4 30C598 27 605.6 20.4 609 19.2Z"/>
<path d="M596.2 19.2C598.6 22 604.7 28.8 607.2 31.4C608.4 32.4 609.6 31.4 608.8 30C607.2 27 599.6 20.4 596.2 19.2Z"/>
</g>
<!-- status icons -->
<g stroke="#ddd" stroke-width="1.1" fill="none">
<path d="M925.6 20.5V31M921.4 23.4V25.4Q921.4 26.8 925.6 28.4M929.8 23V25Q929.8 26.4 925.6 27.4"/>
<path d="M946.4 24.4A2.8 2.8 0 0 0 943.6 21.6M949 24.4A5.4 5.4 0 0 0 943.6 19" stroke-width="1"/>
<rect x="954.6" y="24.2" width="5" height="7.6" rx="0.6" stroke-width="0.9"/>
<path d="M964.4 24.4A2.8 2.8 0 0 0 961.6 21.6M967 24.4A5.4 5.4 0 0 0 961.6 19" stroke-width="1"/>
</g>
<g fill="#ddd"><circle cx="925.6" cy="31" r="1.2"/><path d="M924 21.6L925.6 19.2L927.2 21.6Z"/><circle cx="921.4" cy="23" r="1.1"/><rect x="928.8" y="21.8" width="2" height="2"/>
<rect x="936.4" y="25.4" width="8.6" height="6.4" rx="1"/></g>
<rect x="937.6" y="27.4" width="2.6" height="2.4" fill="#2e2e2e"/><rect x="941.2" y="27.4" width="2.6" height="2.4" fill="#2e2e2e"/>
</g>
<g id="tab-icons">
<circle cx="377.7" cy="61.5" r="4.9" fill="none" stroke="#eee" stroke-width="1.2"/>
<g fill="#eee"><circle cx="377.7" cy="59.3" r="1.1"/><circle cx="375.2" cy="61.9" r="1.1"/><circle cx="380.2" cy="61.9" r="1.1"/></g>
<g stroke="#eee" stroke-width="1.2" fill="none"><circle cx="449" cy="62.2" r="4.7"/><path d="M449 59.2V62.5H452"/></g>
<!-- gear -->
<g id="gear-tab"><path d="M492.77 58.32L493.05 56.80L495.15 56.80L495.43 58.32L496.79 59.11L498.25 58.59L499.30 60.41L498.12 61.42L498.12 62.98L499.30 63.99L498.25 65.81L496.79 65.29L495.43 66.08L495.15 67.60L493.05 67.60L492.77 66.08L491.41 65.29L489.95 65.81L488.90 63.99L490.08 62.98L490.08 61.42L488.90 60.41L489.95 58.59L491.41 59.11Z" fill="none" stroke="#eaeaea" stroke-width="1.2" stroke-linejoin="round"/><circle cx="494.1" cy="62.2" r="1.9" fill="none" stroke="#eaeaea" stroke-width="1.1"/></g>
<!-- master/slave -->
<rect x="541.6" y="57" width="8" height="8" fill="#3a3a3a" stroke="#eee" stroke-width="0.9"/><rect x="544.6" y="59.8" width="8.4" height="8" fill="#fff"/>
<!-- command -->
<path d="M616.6 65H620.4M624.6 65H627.5" stroke="#ddd" stroke-width="1"/><path d="M619.8 65.2L623.8 61" stroke="#e05048" stroke-width="1"/>
<!-- zone -->
<rect x="667.4" y="57" width="8" height="8.4" fill="none" stroke="#eee" stroke-width="0.9"/><rect x="664.4" y="59.6" width="8.2" height="8.4" fill="#fff"/>
</g>
<g id="side-icons" fill="none" stroke="#f2f2f2" stroke-width="1.6" stroke-linejoin="round">
<path d="M706.9 314.6Q706.2 309 707.4 306.4Q709.4 301.6 714 301.6H719Q723.6 301.6 725.6 306.4Q726.8 309 726.2 314.6Q726 316.4 724.2 316.4H708.8Q707 316.4 706.9 314.6Z"/>
<circle cx="716.3" cy="309" r="4"/>
<path d="M711.6 328.2H721.4L723.8 330.8V335.2H726.6V341H720.4L719.4 339.8H713.6L712.6 341H706.6V335.2H709.2V330.8Z" stroke-width="1.4"/>
<path d="M706.6 338H709V335.4M726.6 338H724.2V335.4M714.8 337.6H718.2" stroke-width="1"/>
<rect x="707.9" y="350.6" width="16.8" height="19.4" rx="1.2" stroke-width="1.4"/>
<rect x="709.9" y="401.6" width="13.1" height="20.4" rx="0.6" stroke-width="1.2"/>
<circle cx="716.4" cy="410.4" r="3.5" stroke-width="2.5"/>
</g>
<g fill="#f2f2f2">
<rect x="710.1" y="352.6" width="1.7" height="1.7"/><rect x="713.8" y="352.6" width="1.7" height="1.7"/><rect x="717.5" y="352.6" width="1.7" height="1.7"/><rect x="721.2" y="352.6" width="1.7" height="1.7"/>
<rect x="710.1" y="356.1" width="1.7" height="1.7"/><rect x="713.8" y="356.1" width="1.7" height="1.7"/><rect x="717.5" y="356.1" width="1.7" height="1.7"/><rect x="721.2" y="356.1" width="1.7" height="1.7"/>
<rect x="714.6" y="360" width="3.9" height="2"/>
<rect x="711.2" y="403.8" width="1.3" height="1.1"/><rect x="713.9" y="403.8" width="1.3" height="1.1"/><rect x="717.4" y="403.8" width="1.3" height="1.1"/><rect x="720.2" y="403.8" width="1.3" height="1.1"/>
<rect x="710.9" y="415.5" width="1.4" height="1.2"/><rect x="714.1" y="416.6" width="1.4" height="1.2"/><rect x="717.4" y="416.6" width="1.4" height="1.2"/><rect x="720.6" y="415.5" width="1.4" height="1.2"/>
</g>
<g fill="none" stroke="#7fb53a" stroke-width="1.5" stroke-linejoin="round">
<path d="M707.2 380Q716.3 380.8 725.4 380Q727 379.8 726.6 381.6Q724.8 386.2 726.6 390.8Q727 392.6 725.4 392.4Q716.3 391.6 707.2 392.4Q705.6 392.6 706 390.8Q707.8 386.2 706 381.6Q705.6 379.8 707.2 380Z"/>
</g>
<g fill="#7fb53a"><rect x="714.3" y="384.4" width="4.2" height="1.9"/><rect x="710.2" y="388" width="1.5" height="1.4"/><rect x="713.8" y="389" width="1.5" height="1.4"/><rect x="717.3" y="389" width="1.5" height="1.4"/><rect x="720.8" y="388" width="1.5" height="1.4"/></g>
<g id="bottom-icons">
<g stroke="#fff" stroke-width="1.4" fill="none">
<path d="M365.4 474.8H374L378.8 479.6V491.8H365.4Z"/><path d="M374 474.8V479.6H378.8" stroke-width="1.1"/>
</g>
<path d="M387 479.2L394 483.4L387 487.6Z" fill="#fff"/>
<g stroke="#fff" stroke-width="1.1" fill="none">
<path d="M400.6 486.6V475H410.6V480.4"/><path d="M403.6 476.4V478.6M405.6 476.4V478.6M407.6 476.4V478.6" stroke-width="0.8"/>
<path d="M415 480V489.4H404.4"/><path d="M415 482.6H417M415 485.6H417M406 489.4V491.8M409 489.4V491.8M412 489.4V491.8" stroke-width="0.9"/>
<path d="M399.4 490.4L415.6 477.8" stroke-width="1.3"/>
</g>
<!-- zoom -->
<g stroke="#f2f2f2" stroke-width="1.5" fill="none">
<circle cx="394.5" cy="514" r="5.9"/><path d="M391.5 514H397.5" stroke-width="1.6"/><path d="M390.2 518.4L384.4 524"/>
<circle cx="430.2" cy="514" r="5.9"/><path d="M427.2 514H433.2M430.2 511V517" stroke-width="1.6"/><path d="M425.9 518.4L420.1 524"/>
</g>
<!-- chip refresh -->
<g stroke="#fff" stroke-width="1.5" fill="none">
<path d="M723.6 474.4H719.4V490.2H735.4" stroke-width="1.9"/>
<path d="M714 477.8H719M714 483.1H719M714 488.4H719M722 490.2V496M727 490.2V496M731.9 490.2V496M722 470V474.4M735.4 488.4H740" stroke-width="1.5"/>
<path d="M726.6 479.4A6.6 6.6 0 1 1 730.6 486.2" stroke-width="1.7"/>
</g>
<path d="M723.2 480L729.8 478.6L727.2 484.2Z" fill="#fff"/>
<g>
</g>
</g>

</svg>
<div id="txt">
<div class="t " style="left:10.6px;top:3.5px;color:#202020;font-size:8.5px;letter-spacing:-0.36px;">PRO DMX 2 - project1.cq5 - 2.3.4</div>
<div class="t c" style="left:183px;top:52.5px;font-size:8px;">ﾃﾞﾊﾞｲｽ</div>
<div class="t c or" style="left:27.5px;top:172.7px;font-size:8.6px;">Zone A</div>
<div class="t c" style="left:106.5px;top:193.4px;font-size:8px;">最初のDXMｱﾄﾞﾚｽ :</div>
<div class="t c" style="left:261.3px;top:193.4px;font-size:8px;">最後のDMXｱﾄﾞﾚｽ :</div>
<div class="t c" style="left:84.6px;top:208.6px;font-size:8px;">1</div>
<div class="t c" style="left:142.4px;top:208.6px;font-size:8px;">1</div>
<div class="t c" style="left:239.1px;top:208.6px;font-size:8px;">2</div>
<div class="t c" style="left:296.6px;top:208.6px;font-size:8px;">512</div>
<div class="t " style="left:51px;top:208.4px;font-size:8px;">U :</div>
<div class="t " style="left:108.8px;top:208.4px;font-size:8px;"><span style="font-size:6.2px;vertical-align:0.6px">@</span> :</div>
<div class="t " style="left:205.5px;top:208.4px;font-size:8px;">U :</div>
<div class="t " style="left:263.3px;top:208.4px;font-size:8px;"><span style="font-size:6.2px;vertical-align:0.6px">@</span> :</div>
<div class="t c" style="left:98px;top:228.1px;font-size:8px;">名前</div>
<div class="t c" style="left:197px;top:228.1px;font-size:8px;">ﾃﾞｭﾚｰｼｮﾝ</div>
<div class="t c" style="left:258.8px;top:228.1px;font-size:8px;letter-spacing:1px;">ﾌﾟﾛﾊﾟﾃｨ</div>
<div class="t c" style="left:325px;top:228.1px;font-size:8px;letter-spacing:0.5px;">ﾄﾘｶﾞｰ</div>
<div class="t c" style="left:11.3px;top:238.6px;font-size:8.5px;color:#e0e0e0;">1</div>
<div class="t c" style="left:98px;top:239.2px;font-size:7.6px;letter-spacing:-0.45px;color:#fff;">MASTER</div>
<div class="t " style="left:176px;top:239.2px;font-size:7.6px;letter-spacing:-0.25px;color:#fff;">00m 20s 240</div>
<div class="t " style="left:227px;top:239.2px;font-size:7.6px;letter-spacing:-0.4px;color:#fff;">00:00:000</div>
<div class="t b" style="left:259.2px;top:237.5px;font-size:10.6px;color:#fff;transform:scaleX(1.25);transform-origin:left;">#</div>
<div class="t " style="left:267.3px;top:239.9px;font-size:7.5px;color:#fff;">oo</div>
<div class="t c" style="left:11.3px;top:249.77px;font-size:8.5px;color:#e0e0e0;">2</div>
<div class="t c" style="left:98px;top:250.37px;font-size:7.6px;letter-spacing:-0.45px;color:#fff;">DAY</div>
<div class="t " style="left:176px;top:250.37px;font-size:7.6px;letter-spacing:-0.25px;color:#fff;">00m 20s 240</div>
<div class="t " style="left:227px;top:250.37px;font-size:7.6px;letter-spacing:-0.4px;color:#fff;">00:00:000</div>
<div class="t b" style="left:259.2px;top:248.67px;font-size:10.6px;color:#fff;transform:scaleX(1.25);transform-origin:left;">#</div>
<div class="t " style="left:267.3px;top:251.07px;font-size:7.5px;color:#fff;">oo</div>
<div class="t c" style="left:11.3px;top:260.94px;font-size:8.5px;color:#e0e0e0;">3</div>
<div class="t c" style="left:98px;top:261.54px;font-size:7.6px;letter-spacing:-0.45px;color:#fff;">AUG DAY</div>
<div class="t " style="left:176px;top:261.54px;font-size:7.6px;letter-spacing:-0.25px;color:#fff;">00m 20s 640</div>
<div class="t " style="left:227px;top:261.54px;font-size:7.6px;letter-spacing:-0.4px;color:#fff;">00:00:000</div>
<div class="t b" style="left:259.2px;top:259.84px;font-size:10.6px;color:#fff;transform:scaleX(1.25);transform-origin:left;">#</div>
<div class="t " style="left:267.3px;top:262.24px;font-size:7.5px;color:#fff;">oo</div>
<div class="t c b" style="left:298.2px;top:261.94px;font-size:6px;color:#333;">1</div>
<div class="t c" style="left:11.3px;top:272.11px;font-size:8.5px;color:#e0e0e0;">4</div>
<div class="t c" style="left:98px;top:272.71px;font-size:7.6px;letter-spacing:-0.45px;color:#fff;">AUG NIGHT</div>
<div class="t " style="left:176px;top:272.71px;font-size:7.6px;letter-spacing:-0.25px;color:#fff;">00m 20s 640</div>
<div class="t " style="left:227px;top:272.71px;font-size:7.6px;letter-spacing:-0.4px;color:#fff;">00:00:000</div>
<div class="t b" style="left:259.2px;top:271.01px;font-size:10.6px;color:#fff;transform:scaleX(1.25);transform-origin:left;">#</div>
<div class="t " style="left:267.3px;top:273.41px;font-size:7.5px;color:#fff;">oo</div>
<div class="t c b" style="left:298.2px;top:273.11px;font-size:6px;color:#333;">2</div>
<div class="t c" style="left:11.3px;top:283.28px;font-size:8.5px;color:#e0e0e0;">5</div>
<div class="t c" style="left:98px;top:283.88px;font-size:7.6px;letter-spacing:-0.45px;color:#fff;">NIGHT</div>
<div class="t " style="left:176px;top:283.88px;font-size:7.6px;letter-spacing:-0.25px;color:#fff;">00m 20s 240</div>
<div class="t " style="left:227px;top:283.88px;font-size:7.6px;letter-spacing:-0.4px;color:#fff;">00:00:000</div>
<div class="t b" style="left:259.2px;top:282.18px;font-size:10.6px;color:#fff;transform:scaleX(1.25);transform-origin:left;">#</div>
<div class="t " style="left:267.3px;top:284.58px;font-size:7.5px;color:#fff;">oo</div>
<div class="t c" style="left:11.3px;top:294.45px;font-size:8.5px;color:#e0e0e0;">6</div>
<div class="t c" style="left:98px;top:295.05px;font-size:7.6px;letter-spacing:-0.45px;color:#fff;">off</div>
<div class="t " style="left:176px;top:295.05px;font-size:7.6px;letter-spacing:-0.25px;color:#fff;">00m 20s 240</div>
<div class="t " style="left:227px;top:295.05px;font-size:7.6px;letter-spacing:-0.4px;color:#fff;">00:00:000</div>
<div class="t b" style="left:259.2px;top:293.35px;font-size:10.6px;color:#fff;transform:scaleX(1.25);transform-origin:left;">#</div>
<div class="t " style="left:267.3px;top:295.75px;font-size:7.5px;color:#fff;">oo</div>
<div class="t c" style="left:11.3px;top:305.62px;font-size:8.5px;color:#e0e0e0;">7</div>
<div class="t c" style="left:98px;top:306.22px;font-size:7.6px;letter-spacing:-0.45px;color:#fff;">off2</div>
<div class="t " style="left:176px;top:306.22px;font-size:7.6px;letter-spacing:-0.25px;color:#fff;">00m 20s 240</div>
<div class="t " style="left:227px;top:306.22px;font-size:7.6px;letter-spacing:-0.4px;color:#fff;">00:00:000</div>
<div class="t b" style="left:259.2px;top:304.52px;font-size:10.6px;color:#fff;transform:scaleX(1.25);transform-origin:left;">#</div>
<div class="t " style="left:267.3px;top:306.92px;font-size:7.5px;color:#fff;">oo</div>
<div class="t or" style="left:385px;top:57.5px;font-size:8.3px;letter-spacing:0.15px;">In/Out 設定</div>
<div class="t " style="left:457px;top:58.8px;font-size:8px;">時計</div>
<div class="t " style="left:501px;top:58.8px;font-size:8px;">ｵﾌﾟｼｮﾝ</div>
<div class="t " style="left:554.6px;top:58.8px;font-size:8px;letter-spacing:1.05px;">ﾏｽﾀｰ/ｽﾚｰﾌﾞ</div>
<div class="t " style="left:629px;top:58.8px;font-size:8px;">ｺﾏﾝﾄﾞ</div>
<div class="t " style="left:676.7px;top:58.8px;font-size:8px;">ｿﾞｰﾝ</div>
<div class="t " style="left:467px;top:128.9px;font-size:8px;">DMX A :</div>
<div class="t " style="left:506px;top:128.9px;font-size:8px;">OUT</div>
<div class="t " style="left:540.7px;top:129.0px;font-size:8px;">U1</div>
<div class="t " style="left:579.2px;top:128.9px;font-size:8px;letter-spacing:0.9px;">ﾁｬﾝﾈﾙ :</div>
<div class="t " style="left:615.9px;top:129.0px;font-size:8px;">512</div>
<div class="t " style="left:466.5px;top:146.7px;font-size:8px;">DMX B :</div>
<div class="t " style="left:506px;top:146.7px;font-size:8px;">OUT</div>
<div class="t " style="left:540.7px;top:146.79999999999998px;font-size:8px;">U2</div>
<div class="t " style="left:579.2px;top:146.7px;font-size:8px;letter-spacing:0.9px;">ﾁｬﾝﾈﾙ :</div>
<div class="t " style="left:615.9px;top:146.79999999999998px;font-size:8px;">0</div>
<div class="t " style="left:439.7px;top:180.5px;font-size:8px;">ArtNet / sACN :</div>
<div class="t " style="left:503.3px;top:180.6px;font-size:8px;">U1</div>
<div class="t " style="left:543px;top:180.5px;font-size:8px;">&lt;===&gt;</div>
<div class="t " style="left:577.9px;top:180.6px;font-size:8px;">U2</div>
<div class="t " style="left:612.2px;top:180.5px;font-size:8px;">(SD Card Only)</div>
<div class="t c or" style="left:385px;top:256px;font-size:8px;">ﾃﾞﾊﾞｲｽ</div>
<div class="t c" style="left:423px;top:256px;font-size:8px;">ﾄﾘｶﾞｰ</div>
<div class="t c" style="left:471.5px;top:256px;font-size:8px;">Time triggers</div>
<div class="t c" style="left:528.4px;top:256px;font-size:8px;letter-spacing:0.3px;">ｶﾗｰ / CCT</div>
<div class="t c" style="left:565px;top:479.5px;font-size:7.5px;">0%</div>
<div class="t c" style="left:410.5px;top:551.2px;font-size:8px;">19 2月 2026</div>
<div class="t " style="left:372.6px;top:585.6px;font-size:8.3px;">19</div>
<div class="t " style="left:396.8px;top:585.6px;font-size:8.3px;">2</div>
<div class="t " style="left:421.0px;top:585.6px;font-size:8.3px;">2026</div>
<div class="t c" style="left:503.3px;top:511.8px;font-size:7.3px;color:#cfcfcf;">2</div>
<div class="t c" style="left:549.5px;top:511.8px;font-size:7.3px;color:#cfcfcf;">3</div>
<div class="t c" style="left:595.6px;top:511.8px;font-size:7.3px;color:#cfcfcf;">4</div>
<div class="t c" style="left:641.8px;top:511.8px;font-size:7.3px;color:#cfcfcf;">5</div>
<div class="t c" style="left:687.9px;top:511.8px;font-size:7.3px;color:#cfcfcf;">6</div>
<div class="t c" style="left:734.1px;top:511.8px;font-size:7.3px;color:#cfcfcf;">7</div>
<div class="t c" style="left:780.3px;top:511.8px;font-size:7.3px;color:#cfcfcf;">8</div>
<div class="t c" style="left:826.4px;top:511.8px;font-size:7.3px;color:#cfcfcf;">9</div>
<div class="t c" style="left:872.6px;top:511.8px;font-size:7.3px;color:#cfcfcf;">10</div>
<div class="t c" style="left:918.7px;top:511.8px;font-size:7.3px;color:#cfcfcf;">11</div>
<div class="t c" style="left:964.9px;top:511.8px;font-size:7.3px;color:#cfcfcf;">12</div>
<div class="t c" style="left:1011.1px;top:511.8px;font-size:7.3px;color:#cfcfcf;">1</div>
<div class="t c" style="left:413px;top:407.9px;font-size:10.4px;font-weight:bold;color:#2a3040;">1</div>
<div class="t c" style="left:446.2px;top:407.9px;font-size:10.4px;font-weight:bold;color:#2a3040;">2</div>
<div class="t c" style="left:479.4px;top:407.9px;font-size:10.4px;font-weight:bold;color:#3a3a3a;">3</div>
<div class="t c" style="left:512.6px;top:407.9px;font-size:10.4px;font-weight:bold;color:#3a3a3a;">4</div>
<div class="t c" style="left:545.8px;top:407.9px;font-size:10.4px;font-weight:bold;color:#3a3a3a;">5</div>
<div class="t c" style="left:579px;top:407.9px;font-size:10.4px;font-weight:bold;color:#3a3a3a;">6</div>
<div class="t c" style="left:612.2px;top:407.9px;font-size:10.4px;font-weight:bold;color:#3a3a3a;">7</div>
<div class="t c" style="left:645.4px;top:407.9px;font-size:10.4px;font-weight:bold;color:#3a3a3a;">8</div>
<div class="t c b" style="left:413px;top:430.1px;font-size:7.1px;color:#fff;">AUG DAY</div>
<div class="t c b" style="left:446.6px;top:430.1px;font-size:7.1px;color:#fff;">AUG NIGHT</div>
<div class="t" style="left:2px;top:21.8px;font-size:8px;letter-spacing:1.1px;color:#c8c8c8;">ﾂｰﾙ</div>
<div class="t b" style="left:494px;top:18.2px;font-size:8px;letter-spacing:0.5px;color:#eee;">EDIT</div>
<div class="t b" style="left:494px;top:26.2px;font-size:8px;letter-spacing:0.4px;color:#eee;">PANEL</div>
<div class="t b or" style="left:554.4px;top:18.2px;font-size:8px;letter-spacing:0.5px;">STAND</div>
<div class="t b or" style="left:554.4px;top:26.2px;font-size:8px;letter-spacing:0.5px;">ALONE</div>
<div class="t b" style="left:614px;top:18.2px;font-size:8px;letter-spacing:0.5px;color:#eee;">LIVE</div>
<div class="t b" style="left:614px;top:26.2px;font-size:8px;letter-spacing:0.15px;color:#eee;">BOARD</div>
<div class="t b" style="left:971.8px;top:20px;font-size:6.8px;letter-spacing:-0.35px;color:#d4d4d4;">DMX</div>
<div class="t b" style="left:971.8px;top:26.3px;font-size:6.8px;letter-spacing:-0.35px;color:#d4d4d4;">512</div>
<div class="t b" style="left:989.5px;top:20px;font-size:6.8px;letter-spacing:-0.35px;color:#d4d4d4;">ART</div>
<div class="t b" style="left:989.5px;top:26.3px;font-size:6.8px;letter-spacing:-0.35px;color:#d4d4d4;">NET</div>
<div class="t b" style="left:1008.5px;top:20px;font-size:6.8px;letter-spacing:-0.35px;color:#d4d4d4;">SA</div>
<div class="t b" style="left:1008.5px;top:26.3px;font-size:6.8px;letter-spacing:-0.35px;color:#d4d4d4;">CN</div>
<div class="t" style="left:137.4px;top:20.1px;font-size:4.6px;color:#999;">OFF</div>
<div class="t" style="left:155.4px;top:20.1px;font-size:4.6px;color:#999;">OFF</div>
<div class="t b" style="left:172.2px;top:19.9px;font-size:4.9px;color:#e05048;">OFF</div>
<div class="t b" style="left:189.8px;top:19.9px;font-size:4.9px;color:#e05048;">OFF</div>
<div class="t" style="left:701.6px;top:282.5px;font-size:8px;">1024</div>
<div class="t c b" style="left:642.3px;top:354.8px;font-size:17px;color:#2a2a2a;-webkit-text-stroke:0.5px #2a2a2a;">+</div>
<div class="t c b" style="left:607.5px;top:366.3px;font-size:19px;color:#2a2a2a;">-</div>
<div class="t" style="left:512.4px;top:360px;font-size:24px;color:#38b6ff;-webkit-text-stroke:0.45px #38b6ff;"><span style="display:inline-block;transform:scaleX(0.9);transform-origin:left;">P</span><span style="display:inline-block;transform:scaleX(1.12);transform-origin:left;margin-left:1.2px;">0</span></div>

</div>
</body>
</html>
